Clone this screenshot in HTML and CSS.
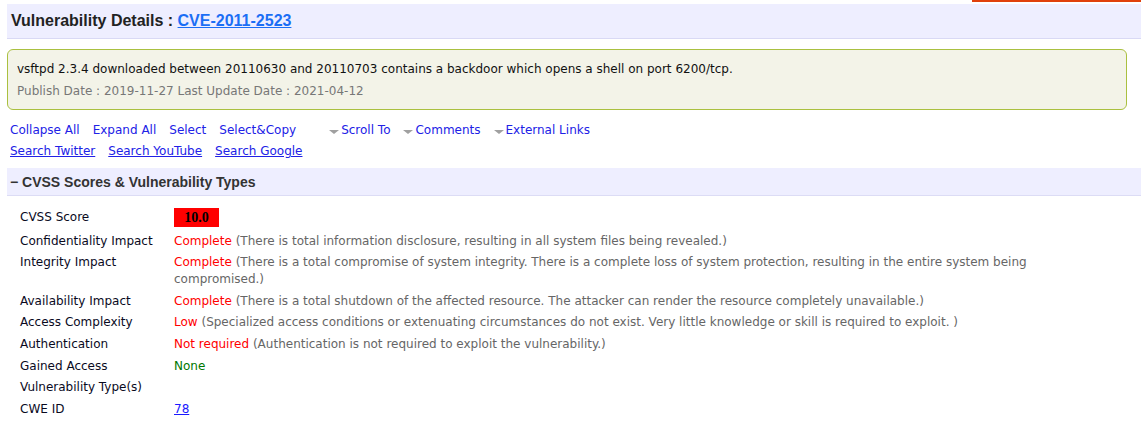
FILE: index.html
```html
<!DOCTYPE html>
<html>
<head>
<meta charset="utf-8">
<link rel="stylesheet" href="styles.css">
</head>
<body>
<div class="topline"></div>
<div class="page">
  <h1 class="title">Vulnerability Details : <a href="#" class="cve">CVE-2011-2523</a></h1>
  <div class="summary">
    <div class="desc">vsftpd 2.3.4 downloaded between 20110630 and 20110703 contains a backdoor which opens a shell on port 6200/tcp.</div>
    <div class="dates">Publish Date : 2019-11-27 Last Update Date : 2021-04-12</div>
  </div>
  <div class="links">
    <div class="linkrow">
      <a href="#">Collapse All</a>
      <a href="#">Expand All</a>
      <a href="#">Select</a>
      <a href="#">Select&amp;Copy</a>
      <span class="drop spaced"><span class="tri"></span><a href="#">Scroll To</a></span>
      <span class="drop"><span class="tri"></span><a href="#">Comments</a></span>
      <span class="drop"><span class="tri"></span><a href="#">External Links</a></span>
    </div>
    <div class="linkrow ul">
      <a href="#">Search Twitter</a>
      <a href="#">Search YouTube</a>
      <a href="#">Search Google</a>
    </div>
  </div>
  <div class="section">&minus; CVSS Scores &amp; Vulnerability Types</div>
  <div class="details">
    <div class="lbl first">CVSS Score</div>
    <div class="val first"><span class="score">10.0</span></div>
    <div class="lbl">Confidentiality Impact</div>
    <div class="val"><span class="bad">Complete</span> (There is total information disclosure, resulting in all system files being revealed.)</div>
    <div class="lbl">Integrity Impact</div>
    <div class="val"><span class="bad">Complete</span> (There is a total compromise of system integrity. There is a complete loss of system protection, resulting in the entire system being compromised.)</div>
    <div class="lbl">Availability Impact</div>
    <div class="val"><span class="bad">Complete</span> (There is a total shutdown of the affected resource. The attacker can render the resource completely unavailable.)</div>
    <div class="lbl">Access Complexity</div>
    <div class="val"><span class="bad">Low</span> (Specialized access conditions or extenuating circumstances do not exist. Very little knowledge or skill is required to exploit. )</div>
    <div class="lbl">Authentication</div>
    <div class="val"><span class="bad">Not required</span> (Authentication is not required to exploit the vulnerability.)</div>
    <div class="lbl">Gained Access</div>
    <div class="val"><span class="good">None</span></div>
    <div class="lbl">Vulnerability Type(s)</div>
    <div class="val"></div>
    <div class="lbl">CWE ID</div>
    <div class="val"><a href="#" class="cwe">78</a></div>
  </div>
</div>
</body>
</html>
```
FILE: styles.css
```css
html, body {
  margin: 0;
  padding: 0;
  background: #fff;
}
body {
  font-family: "DejaVu Sans", Verdana, sans-serif;
  font-size: 12px;
  color: #000;
  position: relative;
}
.topline {
  position: absolute;
  top: 0;
  right: 0;
  width: 169px;
  height: 2px;
  background: #e0400c;
}
.page {
  padding: 4px 0 0 7px;
}
.title {
  margin: 0;
  background: #eeeeff;
  border-bottom: 1px solid #d9d9f5;
  height: 34px;
  line-height: 34px;
  padding-left: 4px;
  font-family: "Liberation Sans", Arial, sans-serif;
  font-size: 16px;
  font-weight: bold;
  color: #222;
}
.cve {
  color: #1b6ef5;
  text-decoration: underline;
}
.summary {
  margin: 10px 14px 0 0;
  background: #f3f3e8;
  border: 1px solid #aac040;
  border-radius: 6px;
  padding: 9px 9px 7px 9px;
}
.desc {
  line-height: 21px;
  color: #111;
}
.dates {
  padding-top: 1px;
  line-height: 21px;
  color: #777;
}
.links {
  margin-top: 10px;
  padding-left: 3px;
}
.linkrow {
  display: flex;
  gap: 13px;
  line-height: 21px;
  height: 21px;
}
.linkrow a {
  color: #2121e6;
  text-decoration: none;
}
.linkrow.ul a {
  text-decoration: underline;
}
.drop {
  display: flex;
  align-items: center;
  gap: 2px;
}
.drop.spaced {
  margin-left: 20px;
}
.tri {
  width: 0;
  height: 0;
  border-left: 5px solid transparent;
  border-right: 5px solid transparent;
  border-top: 4px solid #a0a0a0;
  margin-top: 3px;
}
.section {
  margin-top: 6px;
  background: #eeeeff;
  border-bottom: 1px solid #dcdcf5;
  height: 27px;
  line-height: 28px;
  padding-left: 3px;
  font-family: "Liberation Sans", Arial, sans-serif;
  font-size: 14px;
  font-weight: bold;
  color: #333;
}
.details {
  display: grid;
  grid-template-columns: 154px 880px;
  padding: 12px 0 0 13px;
  row-gap: 4.6px;
  line-height: 17px;
}
.lbl {
  color: #0a0a1e;
  white-space: nowrap;
}
.lbl.first {
  line-height: 19px;
}
.val {
  min-height: 17px;
  color: #666;
}
.val.first {
  line-height: 19px;
  height: 20px;
}
.score {
  display: block;
  background: #ff0000;
  color: #000;
  font-family: "Liberation Serif", "Times New Roman", serif;
  font-weight: bold;
  font-size: 14px;
  width: 45px;
  height: 19px;
  line-height: 20px;
  text-align: center;
}
.bad {
  color: #ff0000;
}
.good {
  color: #007700;
}
.cwe {
  color: #1a1aff;
  text-decoration: underline;
}
```
